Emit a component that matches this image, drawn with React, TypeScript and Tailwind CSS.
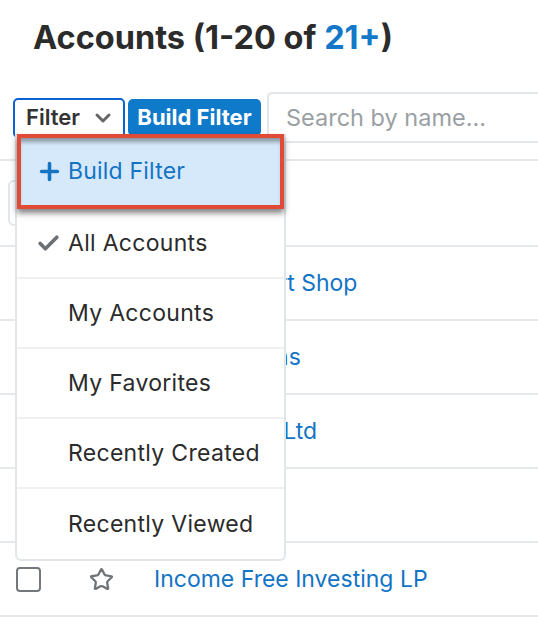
import { Check, ChevronDown, Plus, Star } from 'lucide-react';

const rows = [
  { name: 'Spend Smart Shop' },
  { name: 'Bay Side Inns' },
  { name: 'Sea Region Ltd' },
  { name: 'Q3 ARV Co' },
  { name: 'Income Free Investing LP' },
];

const menu = ['My Accounts', 'My Favorites', 'Recently Created', 'Recently Viewed'];

function AccountRow({ name }: { name: string }) {
  return (
    <div className="flex h-[74px] items-center border-b-2 border-[#e6e9ec]">
      <div className="ml-4 h-[25px] w-[25px] rounded-[4px] border-2 border-[#74787c]" />
      <Star className="ml-[48px] h-[25px] w-[25px] text-[#6f7478]" strokeWidth={2.2} />
      <span className="ml-[40px] text-[23px] text-[#1474c4]">{name}</span>
    </div>
  );
}

export default function App() {
  return (
    <div className="relative h-[622px] w-[538px] overflow-hidden bg-white font-['Inter',sans-serif]">
      <h1 className="ml-[33px] pt-[18px] text-[32.5px] font-bold leading-[40px] text-[#2b2b2b]">
        Accounts (1-20 of <span className="text-[#1478c8]">21+</span>)
      </h1>

      <div className="mt-[34px] flex items-center pl-[13px]">
        <button className="flex h-[40px] w-[112px] items-center justify-between rounded-[5px] border-2 border-[#0b63d1] pl-[11px] pr-[8px] text-[22px] font-semibold text-[#333]">
          Filter
          <ChevronDown className="h-[24px] w-[24px] text-[#666]" strokeWidth={3} />
        </button>
        <button className="ml-[3px] flex h-[37px] w-[133px] items-center justify-center rounded-[5px] bg-[#0f79ca] text-[22px] font-bold text-white">
          Build Filter
        </button>
        <div className="ml-[6px] flex h-[51px] flex-1 items-center rounded-l-[5px] border-2 border-r-0 border-[#e4e7ea] pl-[17px] text-[23.5px] text-[#9a9fa4]">
          Search by name...
        </div>
      </div>

      <div className="mt-[16px] border-t-2 border-[#e6e9ec]">
        <div className="flex h-[86px] items-center border-b-2 border-[#e6e9ec]">
          <div className="ml-2 h-[46px] w-[70px] rounded-[6px] border-2 border-[#e4e7ea]" />
        </div>
        {rows.map((r) => (
          <AccountRow key={r.name} name={r.name} />
        ))}
      </div>

      <div className="absolute left-[15px] top-[134px] w-[271px] rounded-b-[6px] border-2 border-t-0 border-[#e3e6e9] bg-white">
        <div className="relative z-10 flex h-[75px] items-center border-4 border-[#e04a36] bg-[#d6e9fb] pl-[15px] text-[23px] tracking-[0.2px] text-[#1474c4] shadow-[0_4px_6px_rgba(0,0,0,0.5),inset_0_6px_4px_-2px_rgba(0,0,0,0.35)]">
          <Plus className="h-[27px] w-[27px]" strokeWidth={3.2} />
          <span className="ml-[5px]">Build Filter</span>
        </div>
        <div className="flex h-[70px] items-center border-b-2 border-[#eef0f2] pl-[19px] text-[23px] tracking-[0.3px] text-[#2b2b2b]">
          <Check className="h-[25px] w-[25px] text-[#6b7075]" strokeWidth={3.5} />
          <span className="ml-[7px]">All Accounts</span>
        </div>
        {menu.map((m, i) => (
          <div
            key={m}
            className={`flex h-[70px] items-center pl-[51px] text-[23px] tracking-[0.3px] text-[#2b2b2b] ${i < menu.length - 1 ? 'border-b-2 border-[#eef0f2]' : ''}`}
          >
            {m}
          </div>
        ))}
      </div>
    </div>
  );
}
